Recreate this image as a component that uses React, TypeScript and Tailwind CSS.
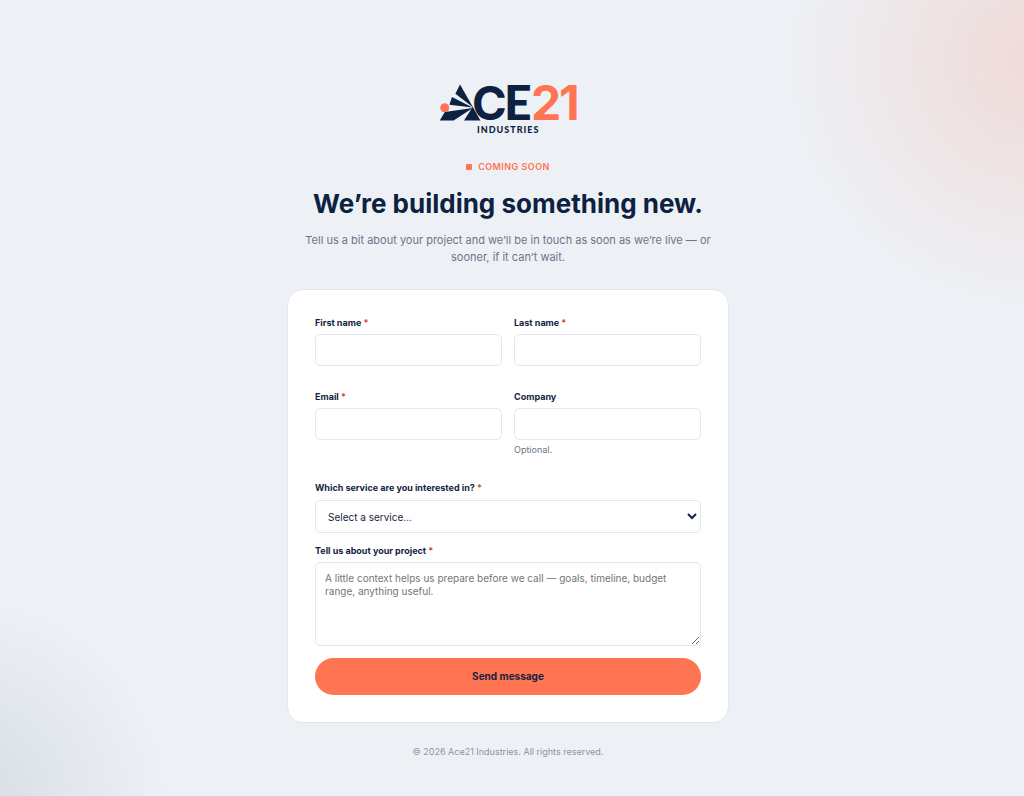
import React from "react";

const labelClass = "text-[9px] leading-3 font-bold text-[#14233f]";
const fieldClass =
  "w-full rounded-[5px] border border-[#e5e7ef] bg-white text-[10px] text-[#14233f] outline-none focus:border-[#ff7452]";

const Required: React.FC = () => <span className="text-[#e0452c]">*</span>;

const Logo: React.FC = () => (
  <svg
    viewBox="0 0 140 52"
    className="h-[52px] w-[140px] overflow-visible"
    role="img"
    aria-label="Ace21 Industries"
  >
    <g fill="#0d2140">
      <path d="M22 0.6 L35 23.2 L17.4 9.8 Z" />
      <path d="M14 13 L34.6 23.6 L11.4 20.8 Z" />
      <path d="M6.8 28 L34.8 24 L15.6 36.4 L1.8 36.4 Z" />
      <path d="M34.8 22.8 L42.4 36.4 L26 36.4 Z" />
    </g>
    <circle cx="6.7" cy="23.7" r="4.5" fill="#ff7452" />
    <g fontFamily="Inter, sans-serif" fontWeight="700" fontSize="48">
      <text x="34" y="36" fill="#0d2140" fontSize="47">
        C
      </text>
      <text x="66" y="36" fill="#0d2140" fontFamily="Lato, sans-serif" fontWeight="900">
        E
      </text>
      <text x="93" y="36" fill="#ff7452">
        2
      </text>
      <text x="121" y="36" fill="#ff7452">
        1
      </text>
    </g>
    <text
      x="39"
      y="49"
      fill="#0d2140"
      fontFamily="Lato, sans-serif"
      fontWeight="900"
      fontSize="9"
      letterSpacing="1"
    >
      INDUSTRIES
    </text>
  </svg>
);

interface TextFieldProps {
  id: string;
  label: string;
  type?: string;
  required?: boolean;
  hint?: string;
}

const TextField: React.FC<TextFieldProps> = ({ id, label, type = "text", required, hint }) => (
  <div className="flex flex-col">
    <label htmlFor={id} className={labelClass}>
      {label} {required && <Required />}
    </label>
    <input id={id} name={id} type={type} required={required} className={`${fieldClass} mt-[5px] h-8 px-3`} />
    {hint && <p className="mt-1 text-[9px] leading-3 text-[#6b7588]">{hint}</p>}
  </div>
);

const ContactForm: React.FC = () => (
  <form
    className="flex w-full flex-col rounded-[16px] border border-[#e3e7ef] bg-white p-[27px]"
    onSubmit={(e) => e.preventDefault()}
  >
    <div className="grid grid-cols-2 gap-x-3 gap-y-[25px]">
      <TextField id="firstName" label="First name" required />
      <TextField id="lastName" label="Last name" required />
      <TextField id="email" label="Email" type="email" required />
      <TextField id="company" label="Company" hint="Optional." />
    </div>

    <label htmlFor="service" className={`${labelClass} mt-[26px]`}>
      Which service are you interested in? <Required />
    </label>
    <select id="service" name="service" required defaultValue="" className={`${fieldClass} mt-[6px] h-[33px] pl-2`}>
      <option value="">Select a service…</option>
      <option value="consulting">Consulting</option>
      <option value="engineering">Engineering</option>
    </select>

    <label htmlFor="project" className={`${labelClass} mt-3`}>
      Tell us about your project <Required />
    </label>
    <textarea
      id="project"
      name="project"
      required
      placeholder="A little context helps us prepare before we call — goals, timeline, budget range, anything useful."
      className={`${fieldClass} mt-[5px] h-[84px] resize-y px-[9px] py-[9px] leading-[13px] placeholder:text-[#757575]`}
    />

    <button
      type="submit"
      className="mt-3 h-[37px] w-full rounded-full bg-[#ff7452] text-[10px] font-bold text-[#14233f] hover:bg-[#f56541]"
    >
      Send message
    </button>
  </form>
);

const App: React.FC = () => {
  return (
    <div className="relative min-h-screen overflow-hidden bg-[#edf1f6] font-['Inter',sans-serif] text-[#0d2140]">
      {/* Background glows */}
      <div className="pointer-events-none absolute -top-[290px] -right-[360px] size-[700px] rounded-full bg-[radial-gradient(circle_closest-side,rgba(255,116,82,0.18)_0%,transparent_74%)]" />
      <div className="pointer-events-none absolute -bottom-[310px] -left-[340px] size-[600px] rounded-full bg-[radial-gradient(circle_closest-side,rgba(13,33,64,0.1)_0%,transparent_70%)]" />

      <main className="relative flex flex-col items-center px-4 pt-[84px] pr-6 pb-9">
        <Logo />
        <p className="mt-[25px] flex items-center gap-[6px] text-[9px] leading-3 font-semibold tracking-wider text-[#ff7452]">
          <span className="size-[6px] rounded-[1px] bg-[#ff7452]" />
          COMING SOON
        </p>
        <h1 className="mt-[13px] text-center text-[26px] leading-9 font-bold">We’re building something new.</h1>
        <p className="mt-[10px] w-full max-w-[420px] text-center text-[11px] leading-[17px] text-[#6b7588]">
          Tell us a bit about your project and we’ll be in touch as soon as we’re live — or sooner, if it can’t wait.
        </p>
        <div className="mt-[23px] w-full max-w-[442px]">
          <ContactForm />
        </div>
        <footer className="mt-[23px] text-[9px] leading-3 text-[#8c94a5]">© 2026 Ace21 Industries. All rights reserved.</footer>
      </main>
    </div>
  );
};

export default App;
